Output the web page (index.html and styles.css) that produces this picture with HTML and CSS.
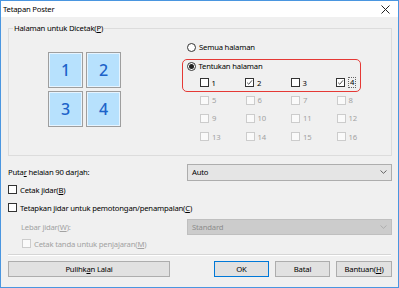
FILE: index.html
```html
<!DOCTYPE html>
<html>
<head>
<meta charset="utf-8">
<link rel="stylesheet" href="styles.css">
</head>
<body>
<div class="window">
  <div class="titlebar">
    <span class="title">Tetapan Poster</span>
    <svg class="close" width="9" height="9" viewBox="0 0 9 9"><path d="M0.5 0.5L8.5 8.5M8.5 0.5L0.5 8.5" stroke="#222" stroke-width="1" fill="none"/></svg>
  </div>
  <div class="client">
    <fieldset class="group">
      <legend>Halaman untuk Dicetak(<u>P</u>)</legend>
      <div class="group-body">
        <div class="tiles">
          <div class="tile">1</div>
          <div class="tile">2</div>
          <div class="tile">3</div>
          <div class="tile">4</div>
        </div>
        <div class="pages">
          <div class="opt first"><span class="radio"></span><span>Semua halaman</span></div>
          <div class="highlight">
            <div class="opt"><span class="radio on"></span><span>Tentukan halaman</span></div>
            <div class="cb-grid top">
              <div class="cb-item"><span class="cb"></span><span>1</span></div>
              <div class="cb-item"><span class="cb"><svg viewBox="0 0 8 8"><path d="M1.3 4.2L3.2 6L6.8 1.6" stroke="#222" stroke-width="0.9" fill="none"/></svg></span><span>2</span></div>
              <div class="cb-item"><span class="cb"></span><span>3</span></div>
              <div class="cb-item"><span class="cb"><svg viewBox="0 0 8 8"><path d="M1.3 4.2L3.2 6L6.8 1.6" stroke="#222" stroke-width="0.9" fill="none"/></svg></span><span class="focus">4</span></div>
            </div>
          </div>
          <div class="cb-grid rest">
            <div class="cb-item off"><span class="cb"></span><span>5</span></div>
            <div class="cb-item off"><span class="cb"></span><span>6</span></div>
            <div class="cb-item off"><span class="cb"></span><span>7</span></div>
            <div class="cb-item off"><span class="cb"></span><span>8</span></div>
            <div class="cb-item off"><span class="cb"></span><span>9</span></div>
            <div class="cb-item off"><span class="cb"></span><span>10</span></div>
            <div class="cb-item off"><span class="cb"></span><span>11</span></div>
            <div class="cb-item off"><span class="cb"></span><span>12</span></div>
            <div class="cb-item off"><span class="cb"></span><span>13</span></div>
            <div class="cb-item off"><span class="cb"></span><span>14</span></div>
            <div class="cb-item off"><span class="cb"></span><span>15</span></div>
            <div class="cb-item off"><span class="cb"></span><span>16</span></div>
          </div>
        </div>
      </div>
    </fieldset>

    <div class="row rotate">
      <span>Puta<u>r</u> helaian 90 darjah:</span>
      <div class="select">
        <span>Auto</span>
        <svg width="7" height="4" viewBox="0 0 7 4"><path d="M0.5 0.5L3.5 3.3L6.5 0.5" stroke="#555" stroke-width="0.9" fill="none"/></svg>
      </div>
    </div>
    <div class="cb-row border-row"><span class="cb"></span><span>Cetak jidar(<u>B</u>)</span></div>
    <div class="cb-row trim-row"><span class="cb"></span><span>Tetapkan jidar untuk pemotongan/penampalan(<u>C</u>)</span></div>
    <div class="row width-row">
      <span class="muted indent">Lebar jidar(<u>W</u>):</span>
      <div class="select disabled">
        <span>Standard</span>
        <svg width="7" height="4" viewBox="0 0 7 4"><path d="M0.5 0.5L3.5 3.3L6.5 0.5" stroke="#aaa" stroke-width="0.9" fill="none"/></svg>
      </div>
    </div>
    <div class="cb-row marks-row off"><span class="cb"></span><span>Cetak tanda untuk penjajaran(<u>M</u>)</span></div>
    <div class="separator"></div>
    <div class="buttons">
      <div class="btn wide">Pulihk<u>a</u>n Lalai</div>
      <div class="btn-group">
        <div class="btn default">OK</div>
        <div class="btn">Batal</div>
        <div class="btn">Bantuan(<u>H</u>)</div>
      </div>
    </div>
  </div>
</div>
</body>
</html>
```
FILE: styles.css
```css
* { box-sizing: border-box; }
html, body { margin: 0; padding: 0; background: #f0f0f0; }
body {
  font-family: "Noto Sans", "Open Sans", sans-serif;
  font-size: 7.7px;
  letter-spacing: -0.2px;
  color: #000;
}
u { text-decoration: underline; text-underline-offset: 1px; }

.window {
  width: 399px;
  height: 288px;
  border: 1px solid #4a96e0;
  background: #f0f0f0;
  display: flex;
  flex-direction: column;
}
.titlebar {
  height: 16px;
  background: #fff;
  display: flex;
  align-items: center;
  justify-content: space-between;
  padding: 0 8px 0 2px;
  flex: none;
}
.title { line-height: 12px; }
.close { display: block; }

.client {
  padding: 0 6px 0 7px;
  flex: 1;
  display: flex;
  flex-direction: column;
}

.group {
  margin: 5px 0 0 0;
  border: 1px solid #dcdcdc;
  padding: 0 0 12px 4px;
  min-width: 0;
}
.group legend {
  padding: 0 1px;
  line-height: 12px;
}
.group-body { display: flex; align-items: flex-start; }

.tiles {
  margin: 18px 0 0 35px;
  display: grid;
  grid-template-columns: 35px 35px;
  grid-template-rows: 36px 36px;
  column-gap: 3px;
  row-gap: 3px;
}
.tile {
  background: #b7e1fd;
  border: 1px solid #9e9e9e;
  box-shadow: inset 0 0 0 1px #e6f4ff;
  color: #1c63c9;
  font-size: 16px;
  letter-spacing: 0;
  font-weight: 500;
  display: flex;
  align-items: center;
  justify-content: center;
}

.pages { margin-left: 61px; margin-top: 7px; width: 180px; }
.opt {
  display: flex;
  align-items: center;
  height: 12px;
  line-height: 12px;
  gap: 3px;
}
.opt.first { padding-left: 5px; }
.radio {
  width: 9px;
  height: 9px;
  border: 1px solid #333;
  border-radius: 50%;
  background: #fff;
  display: flex;
  align-items: center;
  justify-content: center;
  flex: none;
}
.radio.on::after {
  content: "";
  width: 5px;
  height: 5px;
  border-radius: 50%;
  background: #222;
}

.highlight {
  margin-top: 6px;
  border: 1.5px solid #e53935;
  border-radius: 5px;
  padding: 0 0 2.5px 3.5px;
  width: 179px;
}
.cb-grid {
  display: grid;
  grid-template-columns: repeat(4, 45.5px);
  row-gap: 6.3px;
}
.cb-grid.top { margin-top: 4.5px; padding-left: 13px; }
.cb-grid.rest { margin-top: 2px; padding-left: 18px; }
.cb-item {
  display: flex;
  align-items: center;
  height: 12px;
  gap: 3px;
  line-height: 12px;
}
.cb {
  width: 9px;
  height: 9px;
  border: 1px solid #333;
  background: #fff;
  flex: none;
  display: block;
}
.cb svg { display: block; width: 7px; height: 7px; }
.off { color: #a2a2a2; }
.off .cb { border-color: #cccccc; background: #fafafa; }
.focus {
  display: inline-block;
  height: 11px;
  line-height: 9px;
  padding: 0 1px;
  border: 1px dotted #666;
}

.row {
  display: flex;
  align-items: center;
  justify-content: space-between;
}
.rotate { margin-top: 8px; height: 17px; }
.select {
  width: 205px;
  height: 17px;
  background: #e5e5e5;
  border: 1px solid #adadad;
  display: flex;
  align-items: center;
  justify-content: space-between;
  padding: 0 4px 0 4px;
}
.select.disabled {
  height: 16px;
  background: #cccccc;
  border-color: #bfbfbf;
  color: #8d8d8d;
}
.select svg { display: block; }

.cb-row {
  display: flex;
  align-items: center;
  gap: 3px;
  height: 12px;
  line-height: 12px;
}
.border-row { margin-top: 3px; }
.trim-row { margin-top: 6px; }
.width-row { margin-top: 5px; height: 16px; }
.muted { color: #a2a2a2; }
.indent { padding-left: 13px; }
.marks-row { margin-top: 3px; padding-left: 14px; }

.separator {
  margin-top: 4px;
  height: 2px;
  border-top: 1px solid #d5d5d5;
  border-bottom: 1px solid #ffffff;
  margin-right: 1px;
}
.buttons {
  margin-top: 5px;
  display: flex;
  justify-content: space-between;
  padding-left: 0;
}
.btn {
  height: 16px;
  width: 55px;
  background: #e1e1e1;
  border: 1px solid #adadad;
  display: flex;
  align-items: center;
  justify-content: center;
  line-height: 12px;
}
.btn.wide { width: 162px; }
.btn.default { border-color: #0078d7; }
.btn-group { display: flex; gap: 6px; }
.btn-group .btn:last-child { width: 56px; }
```
